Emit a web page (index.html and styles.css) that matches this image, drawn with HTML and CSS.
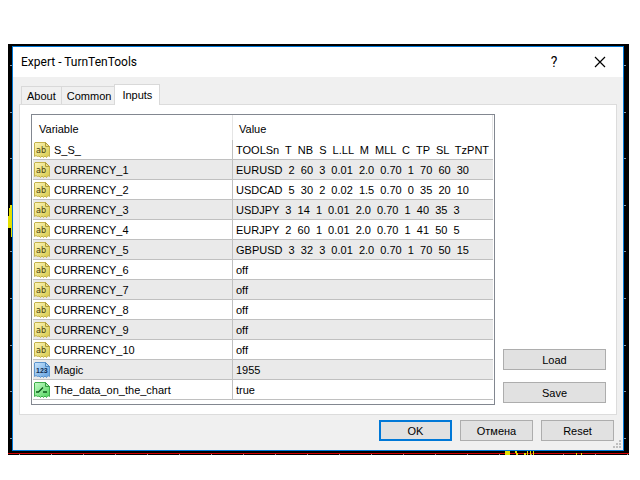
FILE: index.html
```
<!DOCTYPE html>
<html lang="en">
<head>
  <meta charset="UTF-8">
  <meta name="viewport" content="width=device-width, initial-scale=1.0">
  <title>Expert - TurnTenTools</title>
  <link rel="stylesheet" href="styles.css">
</head>
<body>
  <!-- shared row icons -->
  <svg class="defs" aria-hidden="true">
    <defs>
      <linearGradient id="gold" x1="0" y1="0" x2="1" y2="1"><stop offset="0" stop-color="#fdf6bd"/><stop offset="1" stop-color="#d8c948"/></linearGradient>
      <linearGradient id="blue" x1="0" y1="0" x2="1" y2="1"><stop offset="0" stop-color="#c9e4fb"/><stop offset="1" stop-color="#5f9fdf"/></linearGradient>
      <linearGradient id="green" x1="0" y1="0" x2="1" y2="1"><stop offset="0" stop-color="#c6fbc9"/><stop offset="1" stop-color="#4fd45c"/></linearGradient>
      <path id="sheet" d="M1 .5H11.500L15.500 4.500V14.500L14 13.500L12.500 15.500L11 14L9.500 15.500L8 14L6.500 15.500L5 14L3.500 14.500L2 13.500L.5 14.500V1Z"/>
      <symbol id="icon-string" viewBox="0 0 16 16">
        <use href="#sheet" fill="url(#gold)" stroke="#c4b24c"/>
        <path d="M11.500 .5V4.500H15.500Z" fill="#efe48a" stroke="#b09c3c"/>
        <text x="2" y="11" class="glyph" fill="#4a4210">ab</text>
      </symbol>
      <symbol id="icon-int" viewBox="0 0 16 16">
        <use href="#sheet" fill="url(#blue)" stroke="#5c94cc"/>
        <path d="M11.500 .5V4.500H15.500Z" fill="#a5cdf3" stroke="#4d86bf"/>
        <text x="2" y="11" class="glyph small" fill="#0e2d52">123</text>
      </symbol>
      <symbol id="icon-bool" viewBox="0 0 16 16">
        <use href="#sheet" fill="url(#green)" stroke="#3fae4b"/>
        <path d="M11.500 .5V4.500H15.500Z" fill="#9cf0a3" stroke="#379c42"/>
        <path d="M2 10H4.500L9 5.500M9 10H13" fill="none" stroke="#0b5a1a" stroke-width="1.300"/>
      </symbol>
    </defs>
  </svg>

  <div class="chart">
    <svg class="chart-marks" width="621" height="411" shape-rendering="crispEdges" aria-hidden="true">
      <path d="M2 21.500h2M2 68.500h2M2 114.500h2M2 161.500h2M2 207.500h2M2 254.500h2M2 301.500h2M2 347.500h2M2 394.500h2M616 21.500h2M616 68.500h2M616 114.500h2M616 161.500h2M616 207.500h2M616 254.500h2M616 301.500h2M616 347.500h2M616 394.500h2" stroke="#8a939b"/>
      <path d="M0 409.500H621" stroke="#d40000"/>
      <path d="M11 410.500H621" stroke="#8a939b" stroke-dasharray="1 31"/>
      <path d="M0 172h1v-8h1v-3h2v32h-1v-9h-3z" fill="#e4e000"/>
      <path d="M497 407h5v4h-5zM507 407h2v2h-2zM508 409h2v2h-2zM516 409h2v2h-2zM519 407h1v4h-1zM522 407h1v4h-1zM525 407h1v4h-1zM568 409h1v2h-1zM573 409h1v2h-1z" fill="#e4e000"/>
    </svg>

    <div class="dialog" role="dialog" aria-labelledby="dialogTitle">
      <div class="title-bar">
        <h1 id="dialogTitle">Expert - TurnTenTools</h1>
        <button class="title-btn" aria-label="Help">?</button>
        <button class="title-btn" aria-label="Close">
          <svg width="12" height="12" viewBox="0 0 12 12"><path d="M1 1L11 11M11 1L1 11" stroke="#000" stroke-width="1.200"/></svg>
        </button>
      </div>

      <div class="dialog-body">
        <div class="tabs" role="tablist">
          <button class="tab" role="tab">About</button>
          <button class="tab" role="tab">Common</button>
          <button class="tab active" role="tab" aria-selected="true">Inputs</button>
        </div>

        <div class="tab-page" role="tabpanel">
          <div class="list">
            <table>
              <thead>
                <tr><th class="name">Variable</th><th>Value</th></tr>
              </thead>
              <tbody>
                <tr><td><svg class="icon"><use href="#icon-string"/></svg>S_S_</td><td>TOOLSn  T  NB  S  L.LL  M  MLL  C  TP  SL  TzPNT</td></tr>
                <tr><td><svg class="icon"><use href="#icon-string"/></svg>CURRENCY_1</td><td>EURUSD  2  60  3  0.01  2.0  0.70  1  70  60  30</td></tr>
                <tr><td><svg class="icon"><use href="#icon-string"/></svg>CURRENCY_2</td><td>USDCAD  5  30  2  0.02  1.5  0.70  0  35  20  10</td></tr>
                <tr><td><svg class="icon"><use href="#icon-string"/></svg>CURRENCY_3</td><td>USDJPY  3  14  1  0.01  2.0  0.70  1  40  35  3</td></tr>
                <tr><td><svg class="icon"><use href="#icon-string"/></svg>CURRENCY_4</td><td>EURJPY  2  60  1  0.01  2.0  0.70  1  41  50  5</td></tr>
                <tr><td><svg class="icon"><use href="#icon-string"/></svg>CURRENCY_5</td><td>GBPUSD  3  32  3  0.01  2.0  0.70  1  70  50  15</td></tr>
                <tr><td><svg class="icon"><use href="#icon-string"/></svg>CURRENCY_6</td><td>off</td></tr>
                <tr><td><svg class="icon"><use href="#icon-string"/></svg>CURRENCY_7</td><td>off</td></tr>
                <tr><td><svg class="icon"><use href="#icon-string"/></svg>CURRENCY_8</td><td>off</td></tr>
                <tr><td><svg class="icon"><use href="#icon-string"/></svg>CURRENCY_9</td><td>off</td></tr>
                <tr><td><svg class="icon"><use href="#icon-string"/></svg>CURRENCY_10</td><td>off</td></tr>
                <tr><td><svg class="icon"><use href="#icon-int"/></svg>Magic</td><td>1955</td></tr>
                <tr><td><svg class="icon"><use href="#icon-bool"/></svg>The_data_on_the_chart</td><td>true</td></tr>
              </tbody>
            </table>
          </div>
          <div class="side">
            <button class="btn">Load</button>
            <button class="btn">Save</button>
          </div>
        </div>

        <div class="footer">
          <button class="btn default">OK</button>
          <button class="btn">Отмена</button>
          <button class="btn">Reset</button>
        </div>
      </div>
      <svg class="grip" width="8" height="8" shape-rendering="crispEdges" aria-hidden="true"><path d="M6 0h2v2h-2zM3 3h2v2h-2zM6 3h2v2h-2zM0 6h2v2h-2zM3 6h2v2h-2zM6 6h2v2h-2z" fill="#bfbfbf"/></svg>
    </div>
  </div>
</body>
</html>
```
FILE: styles.css
```
* { box-sizing:border-box; }
body { margin:0; padding:44px 11px 0 8px; background:#fff; color:#000; font:11px/16px "Liberation Sans",Arial,sans-serif; }
button { font:inherit; color:inherit; margin:0; padding:0; }
.defs { position:absolute; width:0; height:0; }

/* chart behind the dialog */
.chart { position:relative; background:#000; padding:2px 5px 4px 4px; overflow:hidden; }
.chart-marks { position:absolute; left:0; top:0; }

.dialog { position:relative; background:#f0f0f0; border:1px solid #0078d7; }
.title-bar { display:flex; align-items:center; height:30px; padding-left:8px; background:#fff; font-family:Roboto,sans-serif; }
.title-bar h1 { flex:1; margin:0; font-size:12px; font-weight:normal; }
.title-btn { display:flex; align-items:center; justify-content:center; width:46px; height:30px; border:none; background:none; font-size:14px; }

.dialog-body { padding:7px 6px 9px; }
.tabs { display:flex; align-items:flex-end; padding-left:2px; }
.tab { height:18px; padding:0 5px; border:1px solid #d9d9d9; border-bottom:none; border-right:none; background:#f0f0f0; }
.tab.active { position:relative; height:21px; margin:0 0 -1px -2px; padding:0 7px 1px; border-right:1px solid #d9d9d9; background:#fff; }
.tab-page { display:flex; gap:8px; padding:9px 10px 9px 11px; border:1px solid #dcdcdc; background:#fff; }

.list { flex:1; padding:0 1px 4px; border:1px solid #828790; }
table { width:100%; border-collapse:separate; border-spacing:0; table-layout:fixed; }
th { height:25px; padding:2px 6px 0; text-align:left; font-weight:normal; border-right:1px solid #e5e5e5; }
th.name { width:200px; }
td { height:20px; padding:1px 3px 0; border-bottom:1px solid #c0c0c0; white-space:pre; }
td:first-child { border-right:1px solid #c0c0c0; }
tbody tr:nth-child(even) { background:#eaeaea; }
.icon { width:16px; height:16px; margin:0 4px 0 -2px; vertical-align:top; }
.glyph { font:9px "DejaVu Sans Condensed","DejaVu Sans",sans-serif; }
.glyph.small { font:bold 7px "Liberation Sans",sans-serif; }

.side { display:flex; flex-direction:column; justify-content:flex-end; gap:12px; width:103px; padding-bottom:2px; }
.btn { height:21px; border:1px solid #adadad; background:#e1e1e1; }
.footer { display:flex; justify-content:flex-end; gap:8px; padding:5px 3px 0 0; }
.footer .btn { width:73px; }
.btn.default { border:2px solid #0078d7; }
.grip { position:absolute; right:2px; bottom:2px; }
```
